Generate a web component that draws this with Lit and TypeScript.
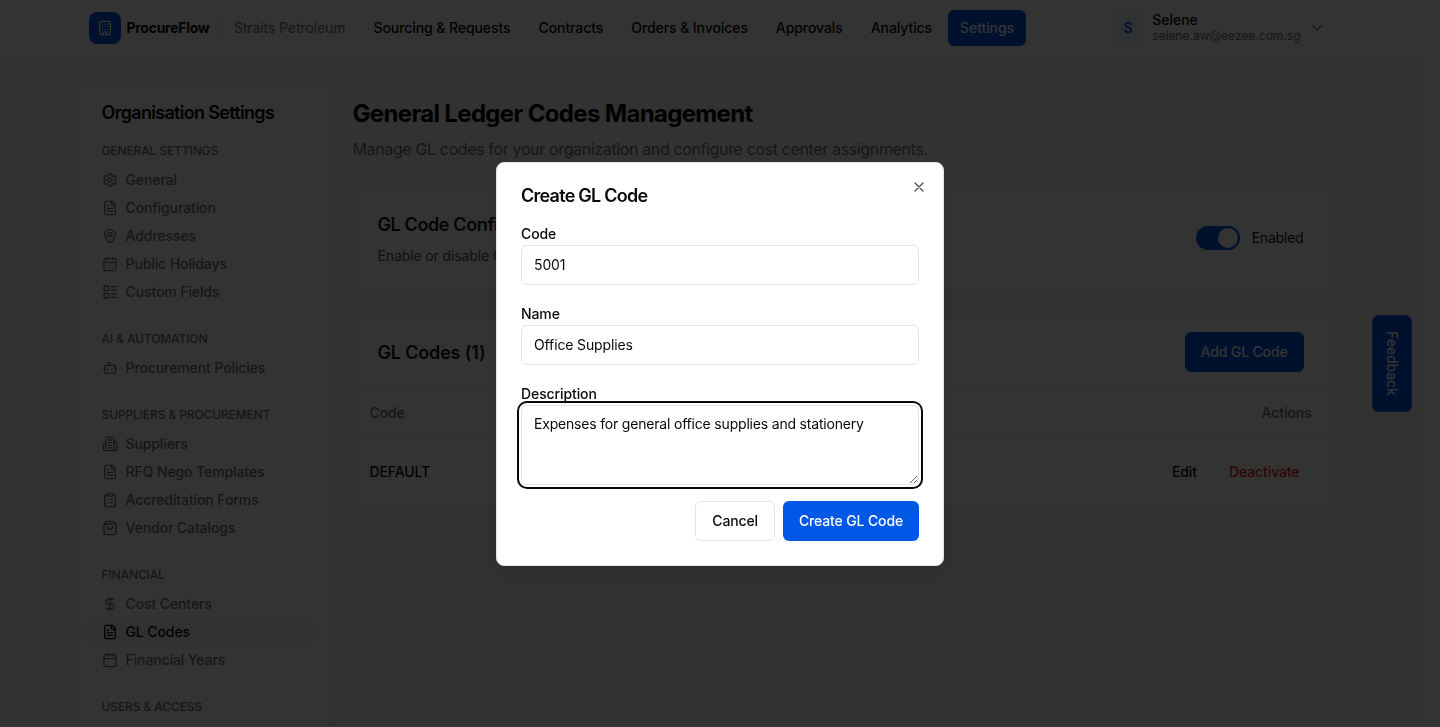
import { LitElement, html, css, svg } from "lit";
import { customElement, property } from "lit/decorators.js";

const icons: Record<string, unknown> = {
  building: svg`<rect x="4" y="2" width="16" height="20" rx="2"/><path d="M9 22v-4h6v4M8 6h.01M16 6h.01M12 6h.01M12 10h.01M12 14h.01M16 10h.01M16 14h.01M8 10h.01M8 14h.01"/>`,
  settings: svg`<path d="M12.22 2h-.44a2 2 0 0 0-2 2v.18a2 2 0 0 1-1 1.73l-.43.25a2 2 0 0 1-2 0l-.15-.08a2 2 0 0 0-2.73.73l-.22.38a2 2 0 0 0 .73 2.73l.15.1a2 2 0 0 1 1 1.72v.51a2 2 0 0 1-1 1.74l-.15.09a2 2 0 0 0-.73 2.73l.22.38a2 2 0 0 0 2.73.73l.15-.08a2 2 0 0 1 2 0l.43.25a2 2 0 0 1 1 1.73V20a2 2 0 0 0 2 2h.44a2 2 0 0 0 2-2v-.18a2 2 0 0 1 1-1.73l.43-.25a2 2 0 0 1 2 0l.15.08a2 2 0 0 0 2.73-.73l.22-.39a2 2 0 0 0-.73-2.73l-.15-.08a2 2 0 0 1-1-1.74v-.5a2 2 0 0 1 1-1.74l.15-.09a2 2 0 0 0 .73-2.73l-.22-.38a2 2 0 0 0-2.73-.73l-.15.08a2 2 0 0 1-2 0l-.43-.25a2 2 0 0 1-1-1.73V4a2 2 0 0 0-2-2z"/><circle cx="12" cy="12" r="3"/>`,
  file: svg`<path d="M15 2H6a2 2 0 0 0-2 2v16a2 2 0 0 0 2 2h12a2 2 0 0 0 2-2V7Z"/><path d="M14 2v4a2 2 0 0 0 2 2h4M10 9H8M16 13H8M16 17H8"/>`,
  pin: svg`<path d="M20 10c0 4.993-5.539 10.193-7.399 11.799a1 1 0 0 1-1.202 0C9.539 20.193 4 14.993 4 10a8 8 0 0 1 16 0"/><circle cx="12" cy="10" r="3"/>`,
  days: svg`<path d="M8 2v4M16 2v4M3 10h18M8 14h.01M12 14h.01M16 14h.01M8 18h.01M12 18h.01M16 18h.01"/><rect x="3" y="4" width="18" height="18" rx="2"/>`,
  list: svg`<rect x="3" y="3" width="7" height="7" rx="1"/><rect x="3" y="14" width="7" height="7" rx="1"/><path d="M14 4h7M14 9h7M14 15h7M14 20h7"/>`,
  bot: svg`<path d="M12 8V4H8"/><rect x="4" y="8" width="16" height="12" rx="2"/><path d="M2 14h2M20 14h2M15 13v2M9 13v2"/>`,
  building2: svg`<path d="M6 22V4a2 2 0 0 1 2-2h8a2 2 0 0 1 2 2v18Z"/><path d="M6 12H4a2 2 0 0 0-2 2v6a2 2 0 0 0 2 2h2M18 9h2a2 2 0 0 1 2 2v9a2 2 0 0 1-2 2h-2M10 6h4M10 10h4M10 14h4M10 18h4"/>`,
  clipboard: svg`<rect x="8" y="2" width="8" height="4" rx="1"/><path d="M16 4h2a2 2 0 0 1 2 2v14a2 2 0 0 1-2 2H6a2 2 0 0 1-2-2V6a2 2 0 0 1 2-2h2M12 11h4M12 16h4M8 11h.01M8 16h.01"/>`,
  bag: svg`<path d="M16 10a4 4 0 0 1-8 0M3.103 6.034h17.794"/><path d="M3.4 5.467a2 2 0 0 0-.4 1.2V20a2 2 0 0 0 2 2h14a2 2 0 0 0 2-2V6.667a2 2 0 0 0-.4-1.2l-2-2.667A2 2 0 0 0 17 2H7a2 2 0 0 0-1.6.8z"/>`,
  dollar: svg`<path d="M12 2v20M17 5H9.5a3.5 3.5 0 0 0 0 7h5a3.5 3.5 0 0 1 0 7H6"/>`,
  calendar: svg`<path d="M8 2v4M16 2v4M3 10h18"/><rect x="3" y="4" width="18" height="18" rx="2"/>`,
  chevron: svg`<path d="m6 9 6 6 6-6"/>`,
  close: svg`<path d="M18 6 6 18M6 6l12 12"/>`,
};

@customElement("ui-icon")
class UiIcon extends LitElement {
  @property() name = "";
  static styles = css`
    :host { display: block; width: 16px; height: 16px; flex: none; }
    svg { display: block; width: 100%; height: 100%; fill: none; stroke: currentColor; stroke-width: 2; stroke-linecap: round; stroke-linejoin: round; }
  `;
  render() {
    return html`<svg viewBox="0 0 24 24">${icons[this.name]}</svg>`;
  }
}

const base = css`
  * { box-sizing: border-box; margin: 0; }
  button { font: inherit; letter-spacing: inherit; border: 0; background: none; padding: 0; color: inherit; }
`;

@customElement("top-bar")
class TopBar extends LitElement {
  static styles = [base, css`
    :host { display: block; border-bottom: 1px solid #e4e4e7; background: #fff; }
    .bar { width: 1280px; height: 56px; margin: 0 auto; padding: 0 16px; display: flex; align-items: center; }
    .logo { width: 32px; height: 32px; border-radius: 8px; background: #0058e6; color: #fff; display: grid; place-items: center; }
    .brand { margin-left: 6px; font-weight: 700; letter-spacing: -0.28px; width: 83.5px; white-space: nowrap; }
    .rule { width: 1px; height: 20px; background: #e4e4e7; margin: 0 12px 0 11px; }
    .org { color: #71717a; width: 112.5px; white-space: nowrap; letter-spacing: -0.1px; }
    nav { display: flex; gap: 4px; margin-left: 15px; font-weight: 500; letter-spacing: -0.08px; }
    nav a { height: 36px; padding: 0 12px; display: flex; align-items: center; border-radius: 6px; white-space: nowrap; }
    nav a.on { background: #0058e6; color: #fff; }
    .user { margin-left: auto; margin-right: 12px; display: flex; align-items: center; }
    .avatar { width: 32px; height: 32px; border-radius: 8px; background: #ebf2fe; color: #0058e6; font-weight: 600; display: grid; place-items: center; margin-right: 8px; }
    .who { line-height: 16px; font-weight: 500; }
    .mail { font-size: 12px; line-height: 15px; color: #71717a; font-weight: 400; padding-bottom: 1px; }
    .user ui-icon { margin-left: 8px; color: #71717a; }
  `];
  render() {
    const links = ["Sourcing & Requests", "Contracts", "Orders & Invoices", "Approvals", "Analytics", "Settings"];
    return html`<div class="bar">
      <div class="logo"><ui-icon name="building"></ui-icon></div>
      <div class="brand">ProcureFlow</div><div class="rule"></div><div class="org">Straits Petroleum</div>
      <nav>${links.map((l) => html`<a class=${l === "Settings" ? "on" : ""}>${l}</a>`)}</nav>
      <div class="user"><div class="avatar">S</div>
        <div><div class="who">Selene</div><div class="mail">selene.aw@eezee.com.sg</div></div>
        <ui-icon name="chevron"></ui-icon></div>
    </div>`;
  }
}

const groups: [string, [string, string][]][] = [
  ["General Settings", [["settings", "General"], ["file", "Configuration"], ["pin", "Addresses"], ["days", "Public Holidays"], ["list", "Custom Fields"]]],
  ["AI & Automation", [["bot", "Procurement Policies"]]],
  ["Suppliers & Procurement", [["building2", "Suppliers"], ["file", "RFQ Nego Templates"], ["clipboard", "Accreditation Forms"], ["bag", "Vendor Catalogs"]]],
  ["Financial", [["dollar", "Cost Centers"], ["file", "GL Codes"], ["calendar", "Financial Years"]]],
  ["Users & Access", []],
];

@customElement("settings-nav")
class SettingsNav extends LitElement {
  static styles = [base, css`
    :host { display: block; box-sizing: border-box; width: 256px; flex: none; background: #fff; border: 1px solid #e9e9ec; border-radius: 8px; padding: 17px 12px; box-shadow: 0 1px 2px rgb(0 0 0 / 5%); }
    h2 { font-size: 18px; line-height: 28px; font-weight: 600; letter-spacing: -0.69px; padding: 0 16px; margin-bottom: 16px; }
    section { margin-bottom: 25px; color: #71717a; }
    h3 { font-size: 12px; line-height: 16px; font-weight: 500; letter-spacing: -0.12px; text-transform: uppercase; padding: 0 16px; margin-bottom: 7px; white-space: nowrap; }
    .item { height: 28px; display: flex; align-items: center; gap: 8px; padding: 0 16px; border-radius: 8px; font-weight: 500; letter-spacing: -0.1px; }
    .item.on { background: #f4f4f5; color: #09090b; }
  `];
  render() {
    return html`<h2>Organisation Settings</h2>
      ${groups.map(([title, items]) => html`<section><h3>${title}</h3>
        ${items.map(([icon, label]) => html`<div class="item ${label === "GL Codes" ? "on" : ""}"><ui-icon name=${icon}></ui-icon><span>${label}</span></div>`)}
      </section>`)}`;
  }
}

@customElement("codes-page")
class CodesPage extends LitElement {
  static styles = [base, css`
    :host { display: block; flex: 1; padding: 17px 24px 0 0; letter-spacing: -0.1px; }
    h1 { font-size: 24px; line-height: 32px; font-weight: 700; color: #000; letter-spacing: -0.66px; }
    .sub { font-size: 16px; line-height: 24px; color: #71717a; margin-top: 7px; letter-spacing: -0.365px; }
    .card { background: #fff; border: 1px solid #e4e4e7; border-radius: 8px; box-shadow: 0 1px 2px rgb(0 0 0 / 5%); }
    .config { margin-top: 24px; height: 106px; padding: 0 24px; display: flex; align-items: center; justify-content: space-between; }
    h2 { font-size: 18px; line-height: 28px; font-weight: 600; color: #111827; letter-spacing: -0.17px; }
    .config h2 { padding-top: 1px; letter-spacing: -0.38px; }
    .head h2 { padding-top: 1px; }
    .hint { color: #4b5563; margin-top: 7px; line-height: 20px; letter-spacing: -0.12px; }
    .state { display: flex; align-items: center; gap: 12px; color: #111827; letter-spacing: -0.2px; }
    .switch { width: 44px; height: 24px; border-radius: 12px; padding: 2px; background: #0058e6; display: flex; justify-content: flex-end; }
    .thumb { width: 20px; height: 20px; border-radius: 50%; background: #fff; }
    .codes { margin-top: 24px; }
    .head { height: 73px; padding: 0 24px; display: flex; align-items: center; justify-content: space-between; border-bottom: 1px solid #e4e4e7; }
    .add { height: 40px; padding: 0 16px; border-radius: 6px; background: #0058e6; color: #fff; font-weight: 500; letter-spacing: -0.15px; }
    .row { display: flex; align-items: center; justify-content: space-between; padding: 0 16px; font-weight: 500; }
    .labels { height: 48px; color: #71717a; border-bottom: 1px solid #ececef; }
    .data { height: 69px; }
    .actions { display: flex; gap: 8px; }
    .actions button { padding: 0 12px; height: 36px; }
    .danger { color: #dc2626; }
  `];
  render() {
    return html`<h1>General Ledger Codes Management</h1>
      <p class="sub">Manage GL codes for your organization and configure cost center assignments.</p>
      <div class="card config">
        <div><h2>GL Code Configuration</h2><p class="hint">Enable or disable GL codes for your organization</p></div>
        <div class="state"><div class="switch"><div class="thumb"></div></div><span>Enabled</span></div>
      </div>
      <div class="card codes">
        <div class="head"><h2>GL Codes (1)</h2><button class="add">Add GL Code</button></div>
        <div class="row labels"><span>Code</span><span>Actions</span></div>
        <div class="row data"><span>DEFAULT</span><div class="actions"><button>Edit</button><button class="danger">Deactivate</button></div></div>
      </div>`;
  }
}

@customElement("create-dialog")
class CreateDialog extends LitElement {
  static styles = [base, css`
    :host { position: fixed; left: 50%; top: 50%; transform: translate(-50%, -50%); box-sizing: border-box; width: 448px; display: grid; gap: 16px; background: #fff; border: 1px solid #e4e4e7; border-radius: 8px; padding: 24px; letter-spacing: -0.1px; box-shadow: 0 10px 15px -3px rgb(0 0 0 / 10%), 0 4px 6px -4px rgb(0 0 0 / 10%); }
    h2 { font-size: 18px; line-height: 18px; font-weight: 600; letter-spacing: -0.74px; }
    .close { position: absolute; right: 16px; top: 16px; opacity: 0.7; }
    .field { font-size: 16px; line-height: 24px; }
    label { font-size: 14px; line-height: 14px; font-weight: 500; }
    input, textarea { display: block; width: 100%; border: 1px solid #e4e4e7; border-radius: 6px; background: #fff; color: #09090b; font: 400 14px/20px Inter, sans-serif; letter-spacing: -0.19px; padding: 8px 12px; outline: none; }
    input { height: 40px; letter-spacing: -0.13px; }
    textarea { position: relative; height: 80px; resize: vertical; box-shadow: 0 0 0 2px #fff, 0 0 0 4px #09090b; }
    .foot { display: flex; justify-content: flex-end; gap: 8px; letter-spacing: -0.14px; }
    .foot button { height: 40px; padding: 0 16px; border-radius: 6px; font-weight: 500; }
    .foot .cancel { border: 1px solid #e4e4e7; }
    .foot .go { background: #0058e6; color: #fff; }
  `];
  render() {
    return html`<h2>Create GL Code</h2>
      <div class="field"><label>Code</label><input .value=${"5001"} /></div>
      <div class="field"><label>Name</label><input .value=${"Office Supplies"} /></div>
      <div class="field"><label>Description</label><textarea .value=${"Expenses for general office supplies and stationery"}></textarea></div>
      <div class="foot"><button class="cancel">Cancel</button><button class="go">Create GL Code</button></div>
      <button class="close"><ui-icon name="close"></ui-icon></button>`;
  }
}

@customElement("app-root")
class AppRoot extends LitElement {
  static styles = [base, css`
    :host { display: block; height: 100vh; overflow: hidden; background: #fff; color: #09090b; font: 400 14px/20px Inter, sans-serif; -webkit-font-smoothing: antialiased; }
    .page { width: 1425px; height: 100%; background: #fafafa; overflow: hidden; }
    .columns { width: 1280px; height: 720px; margin: 24px auto 0; display: flex; gap: 24px; align-items: stretch; }
    .feedback { position: fixed; right: 28px; top: 315px; width: 40px; height: 97px; border-radius: 6px; background: #0058e6; color: #fff; font-weight: 500; letter-spacing: -0.1px; display: grid; place-items: center; writing-mode: vertical-rl; border: 1px solid #2f76ea; }
    .overlay { position: fixed; inset: 0; background: rgb(0 0 0 / 80%); }
  `];
  render() {
    return html`<div class="page"><top-bar></top-bar>
        <div class="columns"><settings-nav></settings-nav><codes-page></codes-page></div></div>
      <div class="feedback">Feedback</div>
      <div class="overlay"></div>
      <create-dialog></create-dialog>`;
  }
}
